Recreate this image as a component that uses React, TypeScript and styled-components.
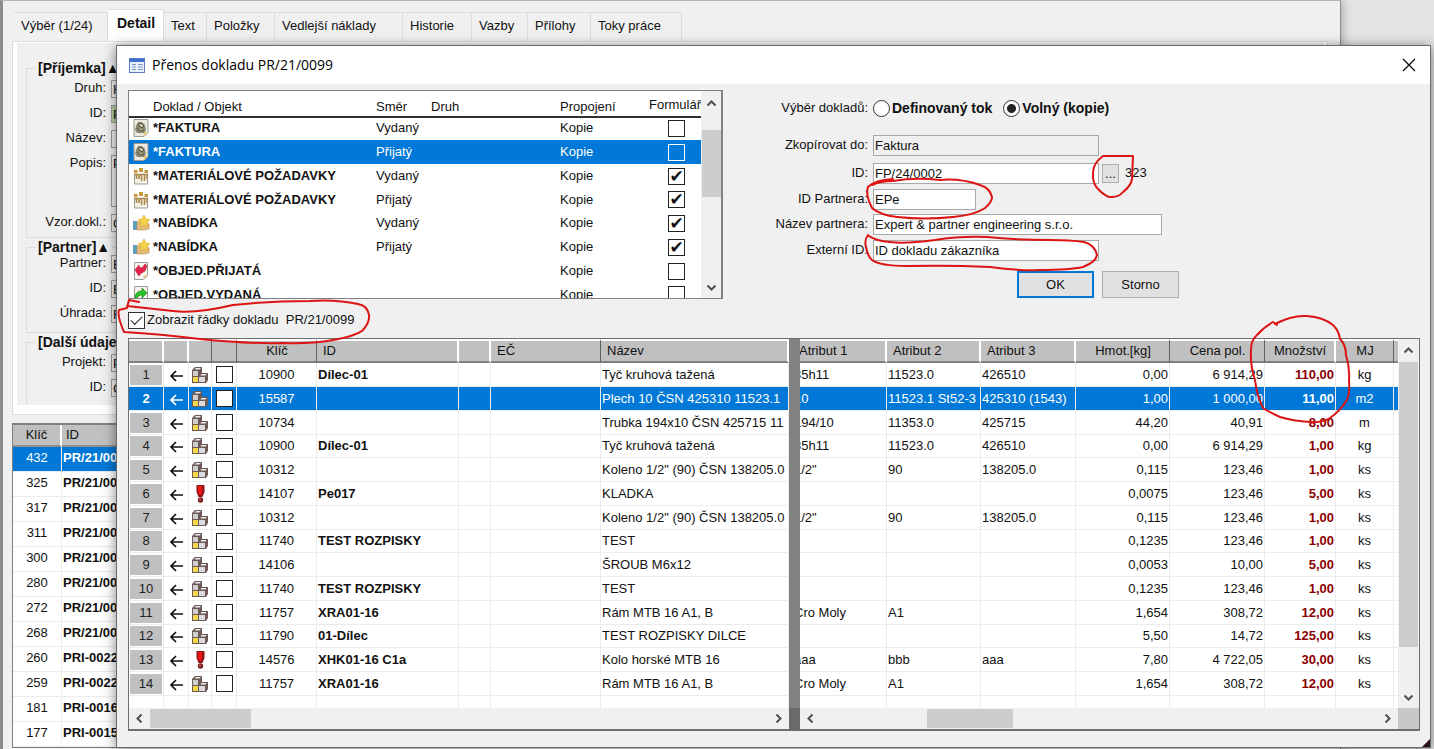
import React from 'react';
import styled, { createGlobalStyle, css } from 'styled-components';

const BLUE = '#0078d7';
const FACE = '#f0f0f0';
const UI_FONT = '"Liberation Sans", Arial, sans-serif';

const GlobalStyle = createGlobalStyle`
  *, *::before, *::after { box-sizing: border-box; }
  body { margin: 0; background: #e4e4e4; font: 13px/16px ${UI_FONT}; color: #111; }
  input, button, textarea { font: inherit; color: inherit; margin: 0; }
  table { border-collapse: separate; border-spacing: 0; table-layout: fixed; }
`;

/* ---------- main window ---------- */

const Desktop = styled.div`
  position: relative;
  min-height: 100vh;
  overflow: hidden;
  padding-right: 93px;
  display: flex;
`;

const MainWindow = styled.main`
  flex: 1;
  min-width: 0;
  background: ${FACE};
  border-left: 3px solid #8c8c8c;
  border-right: 1px solid #8c8c8c;
  border-top: 1px solid #b8b8b8;
  padding: 8px 12px 0 9px;
  box-shadow: 0 0 10px rgba(0, 0, 0, 0.35);
`;

const Tabs = styled.nav`
  display: flex;
  align-items: flex-end;
  height: 32px;
  padding-left: 2px;
  position: relative;
`;

const Tab = styled.button<{ $active?: boolean; $w: number }>`
  width: ${p => p.$w}px;
  height: ${p => (p.$active ? 32 : 29)}px;
  padding: 0 0 2px 7px;
  text-align: left;
  white-space: nowrap;
  border: 1px solid #dcdcdc;
  border-left: 0;
  border-bottom: 0;
  background: ${FACE};
  ${p => p.$active && css`
    background: #fff;
    font-size: 14px;
    font-weight: bold;
    padding: 0 0 6px 9px;
  `}
`;

const DetailPanel = styled.section`
  border: 1px solid #dcdcdc;
  background: #fff;
  padding: 1px 4px 9px;
  height: 374px;
`;

const DetailForm = styled.form`
  background: ${FACE};
  height: 100%;
  overflow: hidden;
  padding: 17px 8px 0 9px;
`;

const Group = styled.fieldset<{ $h: number; $tight?: boolean }>`
  margin: 0 0 1px;
  padding: ${p => (p.$tight ? 0 : 4)}px 0 0;
  height: ${p => p.$h}px;
  border: 1px solid #dcdcdc;
  min-width: 0;
  display: flex;
  flex-direction: column;
  gap: 7px;
  legend {
    font-weight: bold;
    font-size: 14px;
    line-height: 16px;
    margin-left: 9px;
    padding: 0 2px;
    height: 16px;
  }
`;

const DetailRow = styled.div<{ $h?: number; $green?: boolean }>`
  display: flex;
  height: ${p => p.$h ?? 18}px;
  label { width: 80px; text-align: right; padding-right: 1px; }
  input, textarea {
    margin-left: 4px;
    width: 200px;
    height: 100%;
    border: 1px solid #a0a0a0;
    border-radius: 0;
    background: ${p => (p.$green ? '#b4d2a4' : FACE)};
    padding: 0 1px;
    resize: none;
  }
`;

const Records = styled.table`
  width: 100%;
  margin-top: 8px;
  background: #fff;
  border: 1px solid #808080;
  border-top-width: 2px;
  th {
    height: 22px;
    font-weight: normal;
    background: #c0c0c0;
    border-right: 2px solid #fff;
    border-bottom: 2px solid #909090;
    padding: 0;
  }
  th + th { text-align: left; padding-left: 4px; }
  td {
    height: 25px;
    padding: 0 0 3px;
    text-align: center;
    border-right: 1px solid #ececec;
    border-bottom: 1px solid #ececec;
  }
  td + td { font-weight: bold; text-align: left; padding-left: 1px; }
  tr[aria-selected='true'] td { background: ${BLUE}; color: #fff; }
`;

/* ---------- dialog ---------- */

const Dialog = styled.div`
  position: absolute;
  top: 45px;
  left: 116px;
  right: 3px;
  background: ${FACE};
  border: 1px solid #6b6b6b;
  box-shadow: 0 2px 12px rgba(0, 0, 0, 0.5);
`;

const TitleBar = styled.header`
  display: flex;
  align-items: center;
  height: 38px;
  padding: 0 14px 0 12px;
  background: #fff;
  gap: 7px;
  h1 {
    flex: 1;
    margin: 0;
    font: 14px/20px "Open Sans", "Noto Sans", sans-serif;
    color: #000;
  }
  button { border: 0; background: none; padding: 0; width: 14px; height: 14px; display: flex; }
`;

const DialogBody = styled.div`
  padding: 6px 10px 16px 11px;
`;

const TopRow = styled.div`
  display: flex;
  align-items: flex-start;
`;

const ListFrame = styled.div`
  display: flex;
  flex: none;
  width: 595px;
  height: 209px;
  overflow: hidden;
  border: 1px solid #828282;
  border-width: 1px 2px 1px 1px;
  background: #fff;
`;

const ListTable = styled.table`
  flex: none;
  width: 572px;
  th {
    height: 27px;
    padding: 6px 0 0;
    font-weight: normal;
    text-align: left;
    vertical-align: middle;
    border-bottom: 2px solid #303030;
    background: #fff;
  }
  th:last-child { text-align: right; padding: 3px 0 0; }
  td { height: 24px; padding: 0; white-space: nowrap; }
  tbody tr:first-child td { height: 22px; padding-bottom: 2px; }
  tbody tr:nth-child(4n) td { height: 23px; }
  td:nth-child(2) { font-weight: bold; }
  td:last-child { padding-left: 25px; }
  td svg { display: block; margin-left: 4px; }
  tr[aria-selected='true'] td { background: ${BLUE}; color: #fff; }
`;

const Box = styled.input<{ $tone?: string }>`
  appearance: none;
  display: block;
  width: 17px;
  height: 17px;
  border: 1px solid ${p => p.$tone ?? '#222'};
  background: ${p => (p.$tone ? 'transparent' : '#fff')};
  &:checked::after {
    content: '✔';
    display: block;
    font: 17px/14px "DejaVu Sans", sans-serif;
    text-align: center;
  }
`;

const VScroll = styled.div`
  flex: none;
  width: 21px;
  background: ${FACE};
  display: flex;
  flex-direction: column;
  align-items: center;
`;

const ArrowBox = styled.span<{ $w: number; $h: number }>`
  flex: none;
  width: ${p => p.$w}px;
  height: ${p => p.$h}px;
  display: flex;
  align-items: center;
  justify-content: center;
`;

const Thumb = styled.span<{ $w?: number; $h?: number }>`
  flex: none;
  background: #cdcdcd;
  width: ${p => (p.$w ? p.$w + 'px' : '19px')};
  height: ${p => (p.$h ? p.$h + 'px' : '19px')};
`;

const Spacer = styled.span<{ $size?: number }>`
  flex: ${p => (p.$size !== undefined ? `0 0 ${p.$size}px` : 1)};
`;

const CopyForm = styled.form`
  display: grid;
  grid-template-columns: 145px 1fr;
  column-gap: 5px;
  padding-top: 8px;
`;

const FieldLabel = styled.label<{ $h: number }>`
  height: ${p => p.$h}px;
  line-height: 20px;
  text-align: right;
`;

const FieldCell = styled.div<{ $h: number }>`
  display: flex;
  height: ${p => p.$h}px;
  align-items: flex-start;
`;

const TextBox = styled.input<{ $w: number }>`
  width: ${p => p.$w}px;
  height: 21px;
  border: 1px solid #a8a8a8;
  background: #fff;
  padding: 0 1px;
  &:read-only { background: ${FACE}; }
`;

const RadioLabel = styled.label`
  display: flex;
  align-items: center;
  gap: 2px;
  height: 20px;
  margin-right: 11px;
  font-size: 14px;
  font-weight: bold;
  input {
    appearance: none;
    width: 17px;
    height: 17px;
    border: 1px solid #333;
    border-radius: 50%;
    background: #fff;
  }
  input:checked { background: radial-gradient(circle, #222 0 4px, #fff 5px); }
`;

const PickButton = styled.button`
  width: 17px;
  height: 19px;
  margin: 1px 6px 0 3px;
  padding: 0;
  border: 1px solid #adadad;
  background: #e1e1e1;
  line-height: 14px;
`;

const Code = styled.output`
  line-height: 20px;
`;

const Actions = styled.div`
  grid-column: 2;
  display: flex;
  gap: 8px;
  padding-left: 144px;
`;

const PushButton = styled.button<{ $primary?: boolean }>`
  width: 77px;
  height: 27px;
  padding: 0;
  background: #e1e1e1;
  border: ${p => (p.$primary ? `2px solid ${BLUE}` : '1px solid #adadad')};
`;

const ShowRows = styled.label`
  display: flex;
  width: max-content;
  align-items: center;
  height: 18px;
  margin-top: 12px;
  gap: 2px;
  white-space: pre;
  input {
    appearance: none;
    width: 17px;
    height: 17px;
    border: 1px solid #333;
    background: #fff;
  }
  input:checked::after {
    content: '';
    display: block;
    width: 11px;
    height: 6px;
    margin: 3px 0 0 2px;
    border: solid #222;
    border-width: 0 0 1px 1px;
    transform: rotate(-45deg);
  }
`;

/* ---------- item grid ---------- */

const GridFrame = styled.div`
  display: flex;
  height: 393px;
  margin-top: 9px;
  border: 1px solid #6e6e6e;
  border-width: 1px 1px 2px;
  background: #fff;
`;

const Pane = styled.div<{ $w?: number }>`
  flex: ${p => (p.$w ? `0 0 ${p.$w}px` : '1 1 0')};
  min-width: 0;
  display: flex;
  flex-direction: column;
`;

const PaneView = styled.div`
  flex: 1;
  min-height: 0;
  overflow: hidden;
`;

const Splitter = styled.div`
  flex: none;
  width: 11px;
  background: #828282;
  border-bottom: 21px solid #6a6a6a;
`;

const HScroll = styled.div`
  flex: none;
  display: flex;
  align-items: center;
  height: 21px;
  background: ${FACE};
`;

const GridTable = styled.table<{ $w: number; $shift?: number }>`
  width: ${p => p.$w}px;
  margin-left: -${p => p.$shift ?? 0}px;
  td {
    height: 24px;
    padding: 0 1px;
    overflow: hidden;
    white-space: nowrap;
    border-right: 1px solid #ececec;
    border-bottom: 1px solid #ececec;
    line-height: 20px;
  }
  tbody tr:nth-child(4n) td { height: 23px; }
  tr[aria-selected='true'] td { background: ${BLUE}; color: #fff; }
`;

const Head = styled.th<{ $align?: string; $dark?: boolean }>`
  height: 24px;
  padding: 0 5px 0 6px;
  overflow: hidden;
  font-weight: normal;
  text-align: ${p => p.$align ?? 'left'};
  background: #c0c0c0;
  border-top: 2px solid #fff;
  border-bottom: 2px solid #808080;
  border-right: ${p => (p.$dark ? '1px solid #606060' : '2px solid #fff')};
`;

const Cell = styled.td<{ $align?: string; $bold?: boolean; $color?: string }>`
  text-align: ${p => p.$align ?? 'left'};
  font-weight: ${p => (p.$bold ? 'bold' : 'normal')};
  color: ${p => p.$color ?? 'inherit'};
  svg { display: block; margin: 0 auto; }
  input { margin: 0 auto; }
`;

const NumberTag = styled.span`
  display: block;
  height: 20px;
  line-height: 20px;
  background: #c0c0c0;
  color: #222;
  [aria-selected='true'] & { background: ${BLUE}; color: #fff; font-weight: bold; }
`;

const Corner = styled.span`
  width: 21px;
  height: 21px;
  background: #c8c8c8;
`;

const Grip = styled.svg`
  position: absolute;
  right: 0;
  bottom: 0;
`;

const Marks = styled.svg`
  position: absolute;
  left: 0;
  top: 0;
  width: 100%;
  height: 100%;
  overflow: visible;
  pointer-events: none;
`;

/* ---------- icons ---------- */

const turns = { up: 0, right: 90, down: 180, left: 270 };

function Chevron({ dir }: { dir: keyof typeof turns }) {
  return (
    <svg width="11" height="11" viewBox="0 0 11 11" aria-hidden="true">
      <path d="M1.5 7.5 5.5 3.5 9.5 7.5" fill="none" stroke="#505050" strokeWidth="2" transform={`rotate(${turns[dir]} 5.5 5.5)`} />
    </svg>
  );
}

function WindowIcon() {
  return (
    <svg width="16" height="15" viewBox="0 0 16 15" aria-hidden="true">
      <rect x=".5" y=".5" width="15" height="14" fill="#e8f0fc" stroke="#5b7cc0" />
      <rect x="1" y="1" width="14" height="3" fill="#3f6fd0" />
      <path d="M3 6.500h4M9 6.500h5M3 9h4M9 9h5M3 11.500h4M9 11.500h5" stroke="#7d97c8" />
    </svg>
  );
}

function InvoiceIcon() {
  return (
    <svg width="16" height="18" viewBox="0 0 16 18" aria-hidden="true">
      <path d="M1 .5h14v13l-4 4H1z" fill="#eceae0" stroke="#9a9a90" />
      <path d="M10.500 17.500l4.500-4.500h-4.500z" fill="#e8c874" />
      <path d="M5 3h4l3 3 1 5-2 3H4L2 11l1-4z" fill="#8b8770" />
      <path d="M5 6l3-2 3 3-2 2zM4 9l4 3 3-1" fill="#cfc8a4" stroke="#4d4a3c" />
    </svg>
  );
}

function MaterialIcon() {
  return (
    <svg width="16" height="18" viewBox="0 0 16 18" aria-hidden="true">
      <path d="M1.500 7v10h13V7" fill="#f6f2e4" stroke="#9a9a9a" />
      <path d="M1 3h3.500v3H1zM6 1h4v4H6zM11.500 3H15v3h-3.500z" fill="#c49a3c" />
      <path d="M1 7.500h14M3.500 7v5M6 8v4M8.500 7v7M11.500 8v6M14 8v4" fill="none" stroke="#a88a4a" strokeWidth="1.600" />
    </svg>
  );
}

function OfferIcon() {
  return (
    <svg width="18" height="16" viewBox="0 0 18 16" aria-hidden="true">
      <path d="M0 6h4v9H0z" fill="#5e9dbb" />
      <path d="M4 7l5-1 7 3v5l-5 1H4z" fill="#e2bd7c" stroke="#b98d45" strokeWidth=".6" />
      <path d="M11 0l2 4 4 .6-3 3 .6 4L11 10l-3.600 1.600.6-4-3-3 4-.6z" fill="#f7d34c" stroke="#d8a520" strokeWidth=".6" />
    </svg>
  );
}

function OrderIcon({ incoming }: { incoming?: boolean }) {
  return (
    <svg width="16" height="18" viewBox="0 0 16 18" aria-hidden="true">
      <path d="M1.500 .5h13v13l-4 4h-9z" fill="#f6f4ee" stroke="#9c9c94" />
      <path d="M10.500 17l4-4h-4z" fill="#e8cf8c" />
      {incoming
        ? <path d="M2 8l4-5v2l3 1 3-4 2 2-2 5-5 3-1 2z" fill="#e8244c" stroke="#a81030" strokeWidth=".6" />
        : <path d="M2 12c0-4 2-7 7-7V2l5 5-5 5V9c-3 0-4 1-5 4z" fill="#28c428" stroke="#107010" strokeWidth=".6" />}
    </svg>
  );
}

function ArrowLeft() {
  return (
    <svg width="16" height="14" viewBox="0 0 16 14" aria-hidden="true">
      <path d="M15 8H3.500M8 3 3 8l5 5" fill="none" stroke="currentColor" strokeWidth="1.700" />
    </svg>
  );
}

function BlocksIcon() {
  return (
    <svg width="18" height="18" viewBox="0 0 18 18" aria-hidden="true">
      <path d="M1 4l3-3h7v13l-3 3H1z" fill="#6e5a54" />
      <path d="M2 5h5v5H2z" fill="#cfcfd2" />
      <path d="M3.500 3.500 5 2h5L8.500 3.500z" fill="#ececec" />
      <path d="M2 11h5v5H2z" fill="#f3d84a" />
      <path d="M8 10l2-3h7v7l-2 3H8z" fill="#6e5a54" />
      <path d="M8 11h6v5H8z" fill="#dcdce0" />
      <path d="M9.500 9.500l1-1.500h5l-1 1.500z" fill="#f1f1f1" />
    </svg>
  );
}

function AlertIcon() {
  return (
    <svg width="18" height="18" viewBox="0 0 18 18" aria-hidden="true">
      <path d="M5.500 0h8v7l-2 5h-4l-2-5z" fill="#8e1616" />
      <path d="M7 1h4v7l-1 2H8.500L7 7z" fill="#f01414" />
      <circle cx="9.500" cy="15" r="2.700" fill="#7a2020" />
      <circle cx="9" cy="14.500" r="1" fill="#c06060" />
    </svg>
  );
}

/* ---------- data ---------- */

const tabs: [string, number][] = [
  ['Výběr (1/24)', 94], ['Detail', 56], ['Text', 43], ['Položky', 68], ['Vedlejší náklady', 128],
  ['Historie', 69], ['Vazby', 56], ['Přílohy', 63], ['Toky práce', 91],
];

const records: [string, string][] = [
  ['432', 'PR/21/0099'], ['325', 'PR/21/0098'], ['317', 'PR/21/0097'], ['311', 'PR/21/0096'],
  ['300', 'PR/21/0095'], ['280', 'PR/21/0094'], ['272', 'PR/21/0093'], ['268', 'PR/21/0092'],
  ['260', 'PRI-0022'], ['259', 'PRI-0022'], ['181', 'PRI-0016'], ['177', 'PRI-0015'],
];

const targets: { icon: React.ReactNode; name: string; dir: string; on: boolean }[] = [
  { icon: <InvoiceIcon />, name: '*FAKTURA', dir: 'Vydaný', on: false },
  { icon: <InvoiceIcon />, name: '*FAKTURA', dir: 'Přijatý', on: false },
  { icon: <MaterialIcon />, name: '*MATERIÁLOVÉ POŽADAVKY', dir: 'Vydaný', on: true },
  { icon: <MaterialIcon />, name: '*MATERIÁLOVÉ POŽADAVKY', dir: 'Přijatý', on: true },
  { icon: <OfferIcon />, name: '*NABÍDKA', dir: 'Vydaný', on: true },
  { icon: <OfferIcon />, name: '*NABÍDKA', dir: 'Přijatý', on: true },
  { icon: <OrderIcon incoming />, name: '*OBJED.PŘIJATÁ', dir: '', on: false },
  { icon: <OrderIcon />, name: '*OBJED.VYDANÁ', dir: '', on: false },
];

// key, id, name, attribute 1-3, weight, price, quantity, unit
const items: string[][] = [
  ['10900', 'Dílec-01', 'Tyč kruhová tažená', '35h11', '11523.0', '426510', '0,00', '6 914,29', '110,00', 'kg'],
  ['15587', '', 'Plech 10 ČSN 425310 11523.1', '10', '11523.1 St52-3', '425310 (1543)', '1,00', '1 000,00', '11,00', 'm2'],
  ['10734', '', 'Trubka 194x10 ČSN 425715 11', '194/10', '11353.0', '425715', '44,20', '40,91', '8,00', 'm'],
  ['10900', 'Dílec-01', 'Tyč kruhová tažená', '35h11', '11523.0', '426510', '0,00', '6 914,29', '1,00', 'kg'],
  ['10312', '', 'Koleno 1/2" (90) ČSN 138205.0', '1/2"', '90', '138205.0', '0,115', '123,46', '1,00', 'ks'],
  ['14107', 'Pe017', 'KLADKA', '', '', '', '0,0075', '123,46', '5,00', 'ks'],
  ['10312', '', 'Koleno 1/2" (90) ČSN 138205.0', '1/2"', '90', '138205.0', '0,115', '123,46', '1,00', 'ks'],
  ['11740', 'TEST ROZPISKY', 'TEST', '', '', '', '0,1235', '123,46', '1,00', 'ks'],
  ['14106', '', 'ŠROUB M6x12', '', '', '', '0,0053', '10,00', '5,00', 'ks'],
  ['11740', 'TEST ROZPISKY', 'TEST', '', '', '', '0,1235', '123,46', '1,00', 'ks'],
  ['11757', 'XRA01-16', 'Rám MTB 16 A1, B', 'Cro Moly', 'A1', '', '1,654', '308,72', '12,00', 'ks'],
  ['11790', '01-Dílec', 'TEST ROZPISKY DILCE', '', '', '', '5,50', '14,72', '125,00', 'ks'],
  ['14576', 'XHK01-16 C1a', 'Kolo horské MTB 16', 'aaa', 'bbb', 'aaa', '7,80', '4 722,05', '30,00', 'ks'],
  ['11757', 'XRA01-16', 'Rám MTB 16 A1, B', 'Cro Moly', 'A1', '', '1,654', '308,72', '12,00', 'ks'],
];

const alerts = new Set([5, 12]);
const leftCols = [35, 25, 23, 25, 80, 142, 32, 110, 188];
const rightCols = [94, 94, 95, 94, 95, 71, 58, 12];

const Cols = ({ widths }: { widths: number[] }) => (
  <colgroup>{widths.map((w, i) => <col key={i} style={{ width: w }} />)}</colgroup>
);

function Field({ label, value, h, green }: { label: string; value: string; h?: number; green?: boolean }) {
  const id = React.useId();
  return (
    <DetailRow $h={h} $green={green}>
      <label htmlFor={id}>{label}</label>
      {h ? <textarea id={id} defaultValue={value} /> : <input id={id} defaultValue={value} />}
    </DetailRow>
  );
}

function Background() {
  return (
    <MainWindow>
      <Tabs>
        {tabs.map(([name, w]) => <Tab key={name} $w={w} $active={name === 'Detail'}>{name}</Tab>)}
      </Tabs>
      <DetailPanel>
        <DetailForm>
          <Group $h={178}>
            <legend>[Příjemka]▲</legend>
            <Field label="Druh:" value="H" />
            <Field label="ID:" value="PR/21/0099" green />
            <Field label="Název:" value="" />
            <Field label="Popis:" value="P" h={52} />
            <Field label="Vzor.dokl.:" value="O" />
          </Group>
          <Group $h={94} $tight>
            <legend>[Partner]▲</legend>
            <Field label="Partner:" value="E" />
            <Field label="ID:" value="E" />
            <Field label="Úhrada:" value="F" />
          </Group>
          <Group $h={94}>
            <legend>[Další údaje]▲</legend>
            <Field label="Projekt:" value="P" />
            <Field label="ID:" value="C" />
          </Group>
        </DetailForm>
      </DetailPanel>
      <Records>
        <Cols widths={[49]} />
        <thead><tr><th>Klíč</th><th>ID</th></tr></thead>
        <tbody>
          {records.map(([k, id], i) => (
            <tr key={k} aria-selected={i === 0}><td>{k}</td><td>{id}</td></tr>
          ))}
        </tbody>
      </Records>
    </MainWindow>
  );
}

function TargetList() {
  return (
    <ListFrame>
      <ListTable>
        <Cols widths={[24, 223, 55, 129, 83, 58]} />
        <thead>
          <tr><th /><th>Doklad / Objekt</th><th>Směr</th><th>Druh</th><th>Propojení</th><th>Formulář</th></tr>
        </thead>
        <tbody>
          {targets.map((t, i) => (
            <tr key={i} aria-selected={i === 1}>
              <td>{t.icon}</td><td>{t.name}</td><td>{t.dir}</td><td /><td>Kopie</td>
              <td><Box type="checkbox" aria-label={`Formulář ${t.name} ${t.dir}`} defaultChecked={t.on} $tone={i === 1 ? '#fff' : undefined} /></td>
            </tr>
          ))}
        </tbody>
      </ListTable>
      <VScroll>
        <ArrowBox $w={21} $h={25}><Chevron dir="up" /></ArrowBox>
        <Spacer $size={14} />
        <Thumb $h={67} />
        <Spacer />
        <ArrowBox $w={21} $h={21}><Chevron dir="down" /></ArrowBox>
      </VScroll>
    </ListFrame>
  );
}

function TransferForm() {
  return (
    <CopyForm onSubmit={e => e.preventDefault()}>
      <FieldLabel as="span" $h={37}>Výběr dokladů:</FieldLabel>
      <FieldCell $h={37}>
        <RadioLabel><input type="radio" name="mode" />Definovaný tok</RadioLabel>
        <RadioLabel><input type="radio" name="mode" defaultChecked />Volný (kopie)</RadioLabel>
      </FieldCell>
      <FieldLabel $h={28} htmlFor="copyTo">Zkopírovat do:</FieldLabel>
      <FieldCell $h={28}><TextBox id="copyTo" $w={226} readOnly value="Faktura" /></FieldCell>
      <FieldLabel $h={26} htmlFor="docId">ID:</FieldLabel>
      <FieldCell $h={26}>
        <TextBox id="docId" $w={226} defaultValue="FP/24/0002" />
        <PickButton type="button">...</PickButton>
        <Code htmlFor="docId">323</Code>
      </FieldCell>
      <FieldLabel $h={25} htmlFor="partnerId">ID Partnera:</FieldLabel>
      <FieldCell $h={25}><TextBox id="partnerId" $w={103} defaultValue="EPe" /></FieldCell>
      <FieldLabel $h={26} htmlFor="partnerName">Název partnera:</FieldLabel>
      <FieldCell $h={26}><TextBox id="partnerName" $w={289} defaultValue="Expert & partner engineering s.r.o." /></FieldCell>
      <FieldLabel $h={31} htmlFor="extId">Externí ID:</FieldLabel>
      <FieldCell $h={31}><TextBox id="extId" $w={226} defaultValue="ID dokladu zákazníka" /></FieldCell>
      <Actions>
        <PushButton type="submit" $primary>OK</PushButton>
        <PushButton type="button">Storno</PushButton>
      </Actions>
    </CopyForm>
  );
}

function ItemGrid() {
  return (
    <GridFrame>
      <Pane $w={660}>
        <PaneView>
          <GridTable $w={660}>
            <Cols widths={leftCols} />
            <thead>
              <tr>
                <Head /><Head /><Head $dark /><Head $dark />
                <Head $align="center" $dark>Klíč</Head><Head>ID</Head><Head /><Head $dark>EČ</Head><Head>Název</Head>
              </tr>
            </thead>
            <tbody>
              {items.map((r, i) => (
                <tr key={i} aria-selected={i === 1}>
                  <Cell $align="center"><NumberTag>{i + 1}</NumberTag></Cell>
                  <Cell><ArrowLeft /></Cell>
                  <Cell>{alerts.has(i) ? <AlertIcon /> : <BlocksIcon />}</Cell>
                  <Cell><Box type="checkbox" aria-label={`Řádek ${i + 1}`} /></Cell>
                  <Cell $align="center">{r[0]}</Cell>
                  <Cell $bold>{r[1]}</Cell>
                  <Cell /><Cell />
                  <Cell>{r[2]}</Cell>
                </tr>
              ))}
              <tr>{leftCols.map((_, i) => <Cell key={i} />)}</tr>
            </tbody>
          </GridTable>
        </PaneView>
        <HScroll>
          <ArrowBox $w={21} $h={21}><Chevron dir="left" /></ArrowBox>
          <Thumb $w={101} />
          <Spacer />
          <ArrowBox $w={21} $h={21}><Chevron dir="right" /></ArrowBox>
        </HScroll>
      </Pane>
      <Splitter />
      <Pane>
        <PaneView>
          <GridTable $w={613} $shift={7}>
            <Cols widths={rightCols} />
            <thead>
              <tr>
                <Head>Atribut 1</Head><Head>Atribut 2</Head><Head>Atribut 3</Head>
                <Head $align="center" $dark>Hmot.[kg]</Head><Head $align="center" $dark>Cena pol.</Head>
                <Head $align="center">Množství</Head><Head $align="center" $dark>MJ</Head><Head />
              </tr>
            </thead>
            <tbody>
              {items.map((r, i) => (
                <tr key={i} aria-selected={i === 1}>
                  <Cell>{r[3]}</Cell><Cell>{r[4]}</Cell><Cell>{r[5]}</Cell>
                  <Cell $align="right">{r[6]}</Cell><Cell $align="right">{r[7]}</Cell>
                  <Cell $align="right" $bold $color="#8b0000">{r[8]}</Cell>
                  <Cell $align="center">{r[9]}</Cell><Cell />
                </tr>
              ))}
              <tr>{rightCols.map((_, i) => <Cell key={i} />)}</tr>
            </tbody>
          </GridTable>
        </PaneView>
        <HScroll>
          <ArrowBox $w={21} $h={21}><Chevron dir="left" /></ArrowBox>
          <Spacer $size={106} />
          <Thumb $w={86} />
          <Spacer />
          <ArrowBox $w={21} $h={21}><Chevron dir="right" /></ArrowBox>
        </HScroll>
      </Pane>
      <VScroll>
        <ArrowBox $w={21} $h={23}><Chevron dir="up" /></ArrowBox>
        <Thumb $h={285} />
        <Spacer />
        <ArrowBox $w={21} $h={21}><Chevron dir="down" /></ArrowBox>
        <Corner />
      </VScroll>
    </GridFrame>
  );
}

function HandDrawnMarks() {
  return (
    <Marks aria-hidden="true">
      <g transform="translate(-117 -46)" fill="none" stroke="#dc1414" strokeWidth="2" strokeLinecap="round" strokeLinejoin="round">
        <path d="M139 302 129 300 127 308 119 310Q117 316 124 332Q160 334 200 339Q250 344 283 343Q310 344 333 340Q356 336 363 330Q370 322 369 315Q368 306 358 304Q335 299 310 301Q270 301 233 305Q195 314 173 311L127 306" />
        <path d="M1103 156Q1093 163 1093 173Q1092 184 1099 190Q1107 198 1112 197Q1119 197 1123 192Q1131 186 1132 179L1133 156H1103" />
        <path d="M893 179Q875 180 868 187Q865 194 872 208Q880 215 897 217Q925 220 953 217Q975 215 985 208Q992 202 992 197Q990 188 980 185Q960 178 940 180Q915 177 893 181Q880 181 872 185" />
        <path d="M868 235Q864 240 866 247Q868 257 872 260Q880 266 907 266Q950 265 990 267Q1020 271 1040 270Q1070 270 1083 267Q1096 262 1097 255Q1095 245 1084 242Q1070 240 1050 240Q1015 240 987 237Q960 236 935 240Q905 244 890 242Q876 241 869 236" />
        <path d="M1275 324Q1292 315 1307 316Q1323 317 1333 325Q1339 331 1340 339Q1346 345 1346 355Q1350 368 1349 380Q1350 393 1347 400Q1340 411 1330 418Q1322 423 1310 422Q1293 421 1280 417Q1269 412 1263 408Q1257 396 1255 380Q1250 365 1251 350Q1251 340 1257 335Q1264 327 1273 322L1277 325" />
      </g>
    </Marks>
  );
}

export default function App() {
  return (
    <>
      <GlobalStyle />
      <Desktop>
        <Background />
        <Dialog role="dialog" aria-labelledby="dlgTitle">
          <TitleBar>
            <WindowIcon />
            <h1 id="dlgTitle">Přenos dokladu PR/21/0099</h1>
            <button type="button" aria-label="Zavřít">
              <svg width="14" height="14" viewBox="0 0 14 14"><path d="M1 1 13 13M13 1 1 13" stroke="#000" strokeWidth="1.200" /></svg>
            </button>
          </TitleBar>
          <DialogBody>
            <TopRow>
              <TargetList />
              <TransferForm />
            </TopRow>
            <ShowRows><input type="checkbox" defaultChecked />Zobrazit řádky dokladu  PR/21/0099</ShowRows>
            <ItemGrid />
          </DialogBody>
          <Grip width="8" height="8" viewBox="0 0 8 8" aria-hidden="true"><path d="M8 0v8H0z" fill="#2a1014" /></Grip>
          <HandDrawnMarks />
        </Dialog>
      </Desktop>
    </>
  );
}
